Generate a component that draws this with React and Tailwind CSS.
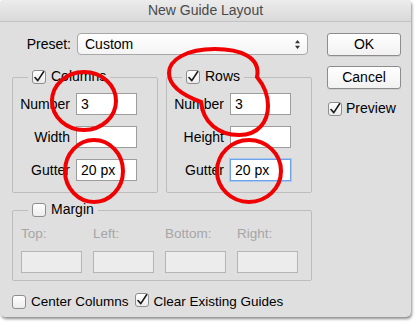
import React from 'react';

const font = { fontFamily: '"Liberation Sans", Arial, sans-serif' };

function Check({ checked }) {
  return (
    <span className="inline-flex h-[14px] w-[14px] shrink-0 items-center justify-center rounded-[3px] border border-[#8e8e8e] bg-gradient-to-b from-white to-[#ececec]">
      {checked && (
        <svg width="12" height="12" viewBox="0 0 12 12">
          <path d="M2 6.5 L4.8 9.6 L10.6 0.8" fill="none" stroke="#1a1a1a" strokeWidth="1.6" strokeLinecap="round" strokeLinejoin="round" />
        </svg>
      )}
    </span>
  );
}

function Field({ label, value, focus }) {
  return (
    <div className="flex items-center">
      <span className="w-[63px] pr-[6px] text-right text-[14px] text-black">{label}</span>
      <div
        className={`flex h-[22px] w-[61px] items-center bg-white px-[4px] text-[14px] text-black ${
          focus ? 'border border-[#6ea3e8] shadow-[0_0_0_1px_#a9c8f0]' : 'border border-[#9d9d9d]'
        }`}
      >
        {value}
      </div>
    </div>
  );
}

function Group({ title, rows }) {
  return (
    <div className="flex h-[116px] w-[146px] flex-col rounded-[2px] border border-[#bdbdbd]">
      <div className="-mt-[12px] ml-[15px] flex w-fit items-center gap-[5px] bg-[#dfdfdf] px-[4px]">
        <Check checked />
        <span className="text-[14px] text-black">{title}</span>
      </div>
      <div className="mt-[6px] flex flex-col gap-[11px]">
        {rows.map((r) => (
          <Field key={r.label} {...r} />
        ))}
      </div>
    </div>
  );
}

function Button({ children }) {
  return (
    <div className="flex h-[23px] w-[74px] items-center justify-center rounded-[3px] border border-[#8c8c8c] bg-gradient-to-b from-white to-[#f1f1f1] text-[14px] text-black shadow-[0_1px_0_rgba(0,0,0,0.08)]">
      {children}
    </div>
  );
}

export default function App() {
  return (
    <div className="relative h-[325px] w-[418px] bg-white" style={font}>
      <div className="flex h-[317px] w-[411px] flex-col overflow-hidden rounded-b-[5px] rounded-t-[4px] bg-[#dfdfdf] shadow-[1px_2px_3px_rgba(0,0,0,0.45)]">
        <div className="flex h-[22px] shrink-0 items-center justify-center border-b border-[#c4c4c4] bg-gradient-to-b from-[#ececec] to-[#d9d9d9] text-[14px] text-[#4a4a4a]">
          New Guide Layout
        </div>
        <div className="flex">
          <div className="flex w-[315px] flex-col pl-[12px]">
            <div className="mt-[11px] flex items-center">
              <span className="w-[65px] pr-[6px] text-right text-[14px] text-black">Preset:</span>
              <div className="flex h-[22px] w-[231px] items-center justify-between rounded-[4px] border border-[#a7a7a7] bg-gradient-to-b from-white to-[#f4f4f4] pl-[7px] pr-[6px] text-[14px] text-black">
                <span>Custom</span>
                <svg width="7" height="11" viewBox="0 0 7 11">
                  <path d="M3.5 1 L6 4.2 H1 Z M3.5 10 L6 6.8 H1 Z" fill="#333" />
                </svg>
              </div>
            </div>
            <div className="mt-[22px] flex gap-[8px]">
              <Group
                title="Columns"
                rows={[
                  { label: 'Number', value: '3' },
                  { label: 'Width', value: '' },
                  { label: 'Gutter', value: '20 px' },
                ]}
              />
              <Group
                title="Rows"
                rows={[
                  { label: 'Number', value: '3' },
                  { label: 'Height', value: '' },
                  { label: 'Gutter', value: '20 px', focus: true },
                ]}
              />
            </div>
            <div className="mt-[17px] flex h-[71px] w-[300px] flex-col rounded-[2px] border border-[#bdbdbd]">
              <div className="-mt-[12px] ml-[15px] flex w-fit items-center gap-[5px] bg-[#dfdfdf] px-[4px]">
                <Check />
                <span className="text-[14px] text-black">Margin</span>
              </div>
              <div className="mt-[4px] flex gap-[11px] pl-[8px]">
                {['Top:', 'Left:', 'Bottom:', 'Right:'].map((l) => (
                  <div key={l} className="flex w-[61px] flex-col">
                    <span className="text-[13.5px] text-[#a6a6a6]">{l}</span>
                    <div className="mt-[7px] h-[22px] w-[61px] border border-[#b5b5b5] bg-[#ececec]" />
                  </div>
                ))}
              </div>
            </div>
            <div className="mt-[11px] flex items-center text-[13.5px] text-black">
              <Check />
              <span className="ml-[5px]">Center Columns</span>
              <span className="ml-[6px]">
                <Check checked />
              </span>
              <span className="ml-[5px]">Clear Existing Guides</span>
            </div>
          </div>
          <div className="flex flex-col pl-[12px] pt-[11px]">
            <Button>OK</Button>
            <div className="mt-[10px]">
              <Button>Cancel</Button>
            </div>
            <div className="ml-[1px] mt-[9px] flex items-center gap-[4px] text-[14px] text-black">
              <Check checked />
              <span>Preview</span>
            </div>
          </div>
        </div>
      </div>
      <svg className="pointer-events-none absolute left-0 top-0" width="418" height="325" viewBox="0 0 418 325">
        <g fill="none" stroke="#f00000" strokeWidth="4">
          <ellipse cx="84" cy="101" rx="32" ry="29" />
          <ellipse cx="94" cy="171" rx="29" ry="31" />
          <ellipse cx="249" cy="171" rx="32" ry="31" />
          <path d="M257 77 C261 57 240 49 215 49 C186 49 169 60 169 73 C169 85 182 95 201 102 C203 122 218 135 239 135 C259 135 268 121 268 106 C268 93 262 83 257 77 Z" />
        </g>
      </svg>
    </div>
  );
}
